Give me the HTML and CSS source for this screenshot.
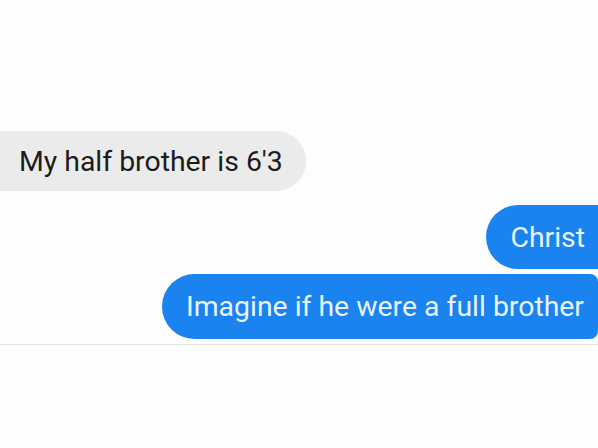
FILE: index.html
```html
<!DOCTYPE html>
<html>
<head>
<meta charset="utf-8">
<link rel="stylesheet" href="styles.css">
</head>
<body>
<div class="chat">
  <div class="msg in">My half brother is 6'3</div>
  <div class="msg out first">Christ</div>
  <div class="msg out last">Imagine if he were a full brother</div>
</div>
<div class="divider"></div>
</body>
</html>
```
FILE: styles.css
```css
html, body {
  margin: 0;
  padding: 0;
  background: #fdfdfd;
  width: 598px;
  height: 448px;
  overflow: hidden;
}
.chat {
  display: flex;
  flex-direction: column;
  padding-top: 131px;
  font-family: Roboto, "Liberation Sans", sans-serif;
  font-size: 28.4px;
}
.msg {
  display: flex;
  align-items: center;
  box-sizing: border-box;
  white-space: nowrap;
}
.in {
  align-self: flex-start;
  height: 60px;
  padding: 0 23px 0 19px;
  border-radius: 0 30px 30px 0;
  background: #ebebeb;
  color: #1c1c1c;
}
.out {
  align-self: flex-end;
  background: #1a83ef;
  color: #e9f3ff;
  padding: 0 14px 0 24px;
}
.first {
  margin-top: 14px;
  height: 64px;
  padding-right: 13px;
  border-radius: 32px 0 0 32px;
}
.last {
  margin-top: 5px;
  height: 65px;
  border-radius: 33px 8px 8px 33px;
}
.divider {
  margin-top: 5px;
  height: 1px;
  background: #e4e4e4;
}
```
